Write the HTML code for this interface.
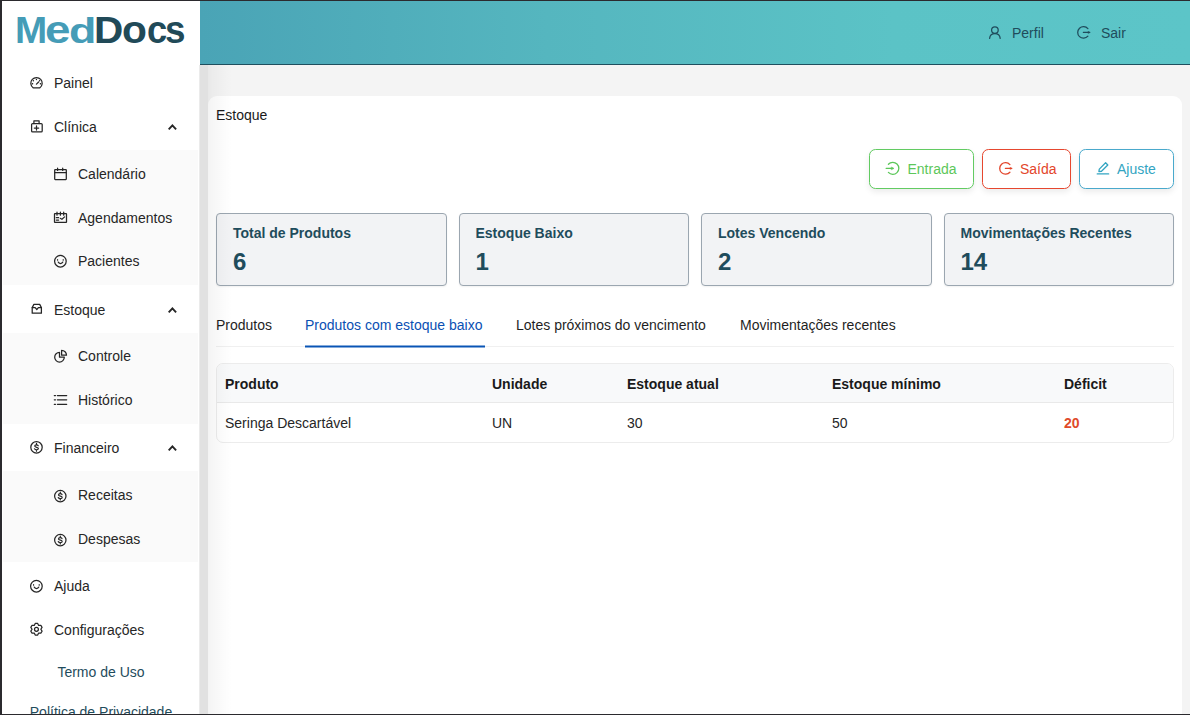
<!DOCTYPE html>
<html><head><meta charset="utf-8">
<style>
*{box-sizing:border-box;margin:0;padding:0}
html,body{width:1190px;height:715px;overflow:hidden;background:#f4f4f4;font-family:"Liberation Sans",sans-serif;font-size:14px;color:#1f1f1f;position:relative}
.abs{position:absolute}
svg{overflow:visible}
#frameT{left:0;top:0;width:1190px;height:1px;background:#2b2a2e;z-index:50}
#frameL{left:0;top:0;width:2px;height:715px;background:#2b2a2e;z-index:50}
#frameB{left:0;top:714px;width:1190px;height:1px;background:#2b2a2e;z-index:50}
#sidebar{left:0;top:0;width:200px;height:715px;background:#fff;z-index:10}
#shadow{left:199px;top:65px;width:40px;height:650px;z-index:11;background:linear-gradient(to right,rgba(0,0,0,0.08) 0,rgba(0,0,0,0.078) 9px,rgba(0,0,0,0.05) 9px,rgba(0,0,0,0.035) 13px,rgba(0,0,0,0.0) 33px)}
#logo{left:0;top:0;width:200px;height:60px}
.g{position:absolute;font-size:100px;line-height:120px;font-weight:700;transform-origin:0 0}
.g.m{color:#459cb7}.g.d{color:#214a58}
.sub{left:3px;width:195px;background:#fafafa}
.item{position:absolute;height:40px;line-height:40px;white-space:nowrap;color:#262626}
#header{left:200px;top:0;width:990px;height:65px;background:linear-gradient(to right,#4aa4b6 0%,#55b6bf 35%,#5bc3c6 70%,#5cc5c8 100%);border-bottom:1px solid #1f4f5e;z-index:5}
.hl{position:absolute;top:24px;color:#1f4c5c;line-height:18px;white-space:nowrap}
#card{left:208px;top:96px;width:974px;height:640px;background:#fff;border-radius:9px}
#title{left:216px;top:106px;line-height:18px;color:#1a1a1a}
.btn{position:absolute;top:149px;height:40px;border:1.5px solid;border-radius:6.5px;background:#fff;box-shadow:0 3px 6px rgba(0,0,0,0.08);white-space:nowrap}
.btn span{position:absolute;top:9.5px;line-height:18px}
.stat{position:absolute;top:213px;width:230.5px;height:73px;background:#f2f3f5;border:1.5px solid #9ba6b0;border-radius:4px;box-shadow:0 1px 2px rgba(0,0,0,0.06)}
.stat .l{position:absolute;left:16px;top:10px;font-weight:700;color:#1f4c5c;line-height:18px;white-space:nowrap}
.stat .n{position:absolute;left:16px;top:34px;font-weight:700;font-size:24px;color:#1f4c5c;line-height:28px}
.tab{position:absolute;top:316px;line-height:18px;white-space:nowrap;color:#1f1f1f}
#tabline{left:216px;top:346px;width:958px;height:1px;background:#f0f0f0}
#ink{left:305px;top:345px;width:180px;height:3px;background:linear-gradient(to bottom,rgba(10,85,181,0.5) 0,rgba(10,85,181,0.5) 1px,#0a55b5 1px,#0a55b5 2px,rgba(10,85,181,0.5) 2px)}
#table{left:216px;top:363px;width:958px;height:80px;border:1px solid #ececec;border-radius:7px;overflow:hidden}
#thead{position:absolute;left:0;top:0;width:100%;height:39px;background:#f8f9fa;border-bottom:1px solid #e9e9e9}
.th{position:absolute;top:11px;font-weight:700;color:#1a1a1a;line-height:18px;white-space:nowrap}
.td{position:absolute;top:50px;color:#262626;line-height:18px;white-space:nowrap}
</style></head><body>
<div id="frameT" class="abs"></div><div id="frameL" class="abs"></div><div id="frameB" class="abs"></div>

<div id="header" class="abs">
  <div class="hl" style="left:812px">Perfil</div>
  <div class="hl" style="left:901px">Sair</div>
</div>
<svg class="abs" style="left:987px;top:25px;z-index:6" width="14" height="14" viewBox="0 0 14 14" fill="none" stroke="#1f4c5c" stroke-width="1.25" stroke-linecap="round" stroke-linejoin="round"><circle cx="7.9" cy="5.1" r="3.3"/><path d="M2.6 13.4C2.9 10.6 4.9 8.7 7.9 8.7S12.9 10.6 13.2 13.4"/></svg>
<svg class="abs" style="left:1076px;top:25px;color:#1f4c5c;z-index:6" width="14" height="14" viewBox="0 0 14 14" fill="none" stroke="#1f4c5c" stroke-width="1.25" stroke-linecap="round" stroke-linejoin="round"><path d="M11.9 3.6A5.8 5.8 0 1 0 11.9 11.2"/><path d="M7.4 7.4H13.2"/><path d="M12.4 6.5L14.3 7.4L12.4 8.3Z" fill="currentColor" stroke-width="0.5"/></svg>

<div id="card" class="abs"></div>
<div id="title" class="abs">Estoque</div>

<div class="btn" style="left:869px;width:105px;border-color:#62cb62;color:#5cc75a"><span style="left:37.5px">Entrada</span></div>
<div class="btn" style="left:982px;width:89px;border-color:#e6472f;color:#e3452b"><span style="left:37px">Saída</span></div>
<div class="btn" style="left:1079px;width:95px;border-color:#49a9cc;color:#33a5c2"><span style="left:37px">Ajuste</span></div>
<svg class="abs" style="left:884px;top:160px;color:#5cc75a;z-index:3" width="14" height="14" viewBox="0 0 14 14" fill="none" stroke="#5cc75a" stroke-width="1.3" stroke-linecap="round" stroke-linejoin="round"><path d="M4.4 4.3A6 6 0 1 1 4.4 12.4"/><path d="M2.2 8.4H8.6"/><path d="M7.6 7.2L10 8.4L7.6 9.6Z" fill="currentColor" stroke-width="0.6"/></svg>
<svg class="abs" style="left:998px;top:161px;color:#e3452b;z-index:3" width="14" height="14" viewBox="0 0 14 14" fill="none" stroke="#e3452b" stroke-width="1.3" stroke-linecap="round" stroke-linejoin="round"><path d="M11.9 3.6A5.8 5.8 0 1 0 11.9 11.2"/><path d="M7.4 7.4H13.2"/><path d="M12.4 6.5L14.3 7.4L12.4 8.3Z" fill="currentColor" stroke-width="0.5"/></svg>
<svg class="abs" style="left:1096px;top:161px;color:#33a5c2;z-index:3" width="14" height="14" viewBox="0 0 14 14" fill="none" stroke="#33a5c2" stroke-width="1.3" stroke-linecap="round" stroke-linejoin="round"><path d="M1.3 12.9H12.6" stroke-width="1.4"/><path d="M2.9 10.5L3.3 8.1L9.6 1.8L11.8 4L5.5 10.3Z" stroke-width="1.3"/></svg>

<div class="stat" style="left:216px"><div class="l">Total de Produtos</div><div class="n">6</div></div>
<div class="stat" style="left:458.5px"><div class="l">Estoque Baixo</div><div class="n">1</div></div>
<div class="stat" style="left:701px"><div class="l">Lotes Vencendo</div><div class="n">2</div></div>
<div class="stat" style="left:943.5px"><div class="l">Movimentações Recentes</div><div class="n">14</div></div>

<div class="tab" style="left:216px">Produtos</div>
<div class="tab" style="left:305px;color:#0a50b3">Produtos com estoque baixo</div>
<div class="tab" style="left:516px">Lotes próximos do vencimento</div>
<div class="tab" style="left:740px">Movimentações recentes</div>
<div id="tabline" class="abs"></div>
<div id="ink" class="abs"></div>

<div id="table" class="abs">
  <div id="thead"></div>
  <div class="th" style="left:8px">Produto</div>
  <div class="th" style="left:275px">Unidade</div>
  <div class="th" style="left:410px">Estoque atual</div>
  <div class="th" style="left:615px">Estoque mínimo</div>
  <div class="th" style="left:847px">Déficit</div>
  <div class="td" style="left:8px">Seringa Descartável</div>
  <div class="td" style="left:275px">UN</div>
  <div class="td" style="left:410px">30</div>
  <div class="td" style="left:615px">50</div>
  <div class="td" style="left:847px;color:#e04a2a;font-weight:700">20</div>
</div>

<div id="sidebar" class="abs">
  <div id="logo" class="abs"><span class="g m" style="left:15.29px;top:7.30px;transform:scale(0.3871,0.3768)">M</span><span class="g m" style="left:45.07px;top:6.57px;transform:scale(0.4583,0.3836)">e</span><span class="g m" style="left:69.31px;top:9.26px;transform:scale(0.4480,0.3562)">d</span><span class="g d" style="left:94.27px;top:7.30px;transform:scale(0.4049,0.3768)">D</span><span class="g d" style="left:122.37px;top:6.22px;transform:scale(0.4075,0.3873)">o</span><span class="g d" style="left:146.55px;top:6.22px;transform:scale(0.3633,0.3873)">c</span><span class="g d" style="left:164.73px;top:6.22px;transform:scale(0.3681,0.3873)">s</span></div>
  <div class="sub abs" style="top:150px;height:135px"></div>
  <div class="sub abs" style="top:333px;height:91px"></div>
  <div class="sub abs" style="top:471px;height:91px"></div>
<div class="item" style="top:63px;left:54px">Painel</div>
<svg class="abs" style="left:30px;top:76px;" width="14" height="14" viewBox="0 0 14 14" fill="none" stroke="#262626" stroke-width="1.25" stroke-linecap="round" stroke-linejoin="round"><path d="M3.1 11.8A5.7 5.7 0 1 1 9.9 11.8Z"/><path d="M6.45 8.1L8.6 6"/><path d="M6.45 3.4v.1M3.4 4.6v.1M2.4 7.8h.2M10.4 7.8h.2M9.6 4.6v.1" stroke-width="1.4"/></svg>
<div class="item" style="top:107px;left:54px">Clínica</div>
<svg class="abs" style="left:30px;top:119px;" width="14" height="14" viewBox="0 0 14 14" fill="none" stroke="#262626" stroke-width="1.25" stroke-linecap="round" stroke-linejoin="round"><rect x="1.6" y="4.6" width="10.6" height="8.3" rx="1"/><path d="M3.9 4.6V1.8H9.1V4.6"/><path d="M6.5 6.9v4.1M4.3 9h4.4"/></svg>
<svg class="abs" style="left:166px;top:122px;" width="14" height="14" viewBox="0 0 14 14" fill="none" stroke="#262626" stroke-width="1.9" stroke-linecap="round" stroke-linejoin="round"><path d="M2.7 7.3L6.4 3.3L10.1 7.3" stroke-width="1.9" stroke-linecap="butt" stroke-linejoin="miter"/></svg>
<div class="item" style="top:290px;left:54px">Estoque</div>
<svg class="abs" style="left:30px;top:302px;" width="14" height="14" viewBox="0 0 14 14" fill="none" stroke="#262626" stroke-width="1.25" stroke-linecap="round" stroke-linejoin="round"><path d="M2.2 11.2V5.6L3.9 2.4H9.7L11.4 5.6V11.2Z"/><path d="M2.2 5.6H5.2L6.8 7.5L8.4 5.6H11.4"/></svg>
<svg class="abs" style="left:166px;top:305px;" width="14" height="14" viewBox="0 0 14 14" fill="none" stroke="#262626" stroke-width="1.9" stroke-linecap="round" stroke-linejoin="round"><path d="M2.7 7.3L6.4 3.3L10.1 7.3" stroke-width="1.9" stroke-linecap="butt" stroke-linejoin="miter"/></svg>
<div class="item" style="top:428px;left:54px">Financeiro</div>
<svg class="abs" style="left:30px;top:440px;" width="14" height="14" viewBox="0 0 14 14" fill="none" stroke="#262626" stroke-width="1.25" stroke-linecap="round" stroke-linejoin="round"><circle cx="6.5" cy="7.3" r="5.7"/><path d="M8.2 5.8C7.9 5.1 7.3 4.8 6.5 4.8C5.5 4.8 4.7 5.3 4.7 6.1C4.7 7.7 8.4 7.0 8.4 8.6C8.4 9.3 7.6 9.8 6.5 9.8C5.6 9.8 4.9 9.5 4.5 8.8M6.5 3.4V4.8M6.5 9.8V11.2" stroke-width="1.2"/></svg>
<svg class="abs" style="left:166px;top:443px;" width="14" height="14" viewBox="0 0 14 14" fill="none" stroke="#262626" stroke-width="1.9" stroke-linecap="round" stroke-linejoin="round"><path d="M2.7 7.3L6.4 3.3L10.1 7.3" stroke-width="1.9" stroke-linecap="butt" stroke-linejoin="miter"/></svg>
<div class="item" style="top:566px;left:54px">Ajuda</div>
<svg class="abs" style="left:29px;top:579px;" width="14" height="14" viewBox="0 0 14 14" fill="none" stroke="#262626" stroke-width="1.25" stroke-linecap="round" stroke-linejoin="round"><circle cx="7.4" cy="7.2" r="5.8"/><path d="M4.6 5.6v.6M10.2 5.6v.6" stroke-width="1.1"/><path d="M5.2 8.1C5.6 9.1 6.4 9.5 7.5 9.5S9.4 9.1 9.8 8.1"/></svg>
<div class="item" style="top:610px;left:54px">Configurações</div>
<svg class="abs" style="left:30px;top:623px;" width="14" height="14" viewBox="0 0 14 14" fill="none" stroke="#262626" stroke-width="1.25" stroke-linecap="round" stroke-linejoin="round"><path d="M5.22 0.48 L7.68 0.48 L8.65 2.44 L10.83 2.30 L12.06 4.43 L10.85 6.25 L12.06 8.07 L10.83 10.20 L8.65 10.06 L7.68 12.02 L5.22 12.02 L4.25 10.06 L2.07 10.20 L0.84 8.07 L2.05 6.25 L0.84 4.43 L2.07 2.30 L4.25 2.44Z"/><circle cx="6.45" cy="6.3" r="1.95"/></svg>
<div class="item" style="top:154px;left:78px">Calendário</div>
<svg class="abs" style="left:53px;top:167px;" width="14" height="14" viewBox="0 0 14 14" fill="none" stroke="#262626" stroke-width="1.25" stroke-linecap="round" stroke-linejoin="round"><rect x="1.7" y="2.5" width="11.6" height="10" rx="0.5"/><path d="M1.7 5.7h11.6M4.6 1.2v2.2M9.7 1.2v2.2"/></svg>
<div class="item" style="top:198px;left:78px">Agendamentos</div>
<svg class="abs" style="left:53px;top:211px;" width="14" height="14" viewBox="0 0 14 14" fill="none" stroke="#262626" stroke-width="1.25" stroke-linecap="round" stroke-linejoin="round"><rect x="1.5" y="2.6" width="12" height="8.8" rx="0.4"/><path d="M4 1.2v3M7.4 1.2v3M10.7 1.2v3M3.3 6.7h2.3M3.3 9h2.3M7.3 7.3l1.6 1 2.7-2.4"/></svg>
<div class="item" style="top:241px;left:78px">Pacientes</div>
<svg class="abs" style="left:53px;top:254px;" width="14" height="14" viewBox="0 0 14 14" fill="none" stroke="#262626" stroke-width="1.25" stroke-linecap="round" stroke-linejoin="round"><circle cx="7.4" cy="7.2" r="5.8"/><path d="M4.6 5.6v.6M10.2 5.6v.6" stroke-width="1.1"/><path d="M5.2 8.1C5.6 9.1 6.4 9.5 7.5 9.5S9.4 9.1 9.8 8.1"/></svg>
<div class="item" style="top:336px;left:78px">Controle</div>
<svg class="abs" style="left:53px;top:349px;" width="14" height="14" viewBox="0 0 14 14" fill="none" stroke="#262626" stroke-width="1.25" stroke-linecap="round" stroke-linejoin="round"><path d="M6.5 3.4V8.2H11.3A4.8 4.8 0 1 1 6.5 3.4Z"/><path d="M8.6 6.2V1.3A4.9 4.9 0 0 1 13.5 6.2Z"/></svg>
<div class="item" style="top:380px;left:78px">Histórico</div>
<svg class="abs" style="left:53px;top:393px;" width="14" height="14" viewBox="0 0 14 14" fill="none" stroke="#262626" stroke-width="1.25" stroke-linecap="round" stroke-linejoin="round"><path d="M1.3 2.5h1.2M1.3 6.8h1.2M1.3 11.3h1.2M4.4 2.5h9.3M4.4 6.8h9.3M4.4 11.3h9.3"/></svg>
<div class="item" style="top:475px;left:78px">Receitas</div>
<svg class="abs" style="left:53px;top:489px;" width="14" height="14" viewBox="0 0 14 14" fill="none" stroke="#262626" stroke-width="1.25" stroke-linecap="round" stroke-linejoin="round"><circle cx="7.3" cy="7.1" r="5.7"/><path d="M9.0 5.6C8.7 4.8999999999999995 8.1 4.6 7.3 4.6C6.3 4.6 5.5 5.1 5.5 5.8999999999999995C5.5 7.5 9.2 6.8 9.2 8.4C9.2 9.1 8.4 9.6 7.3 9.6C6.3999999999999995 9.6 5.699999999999999 9.3 5.3 8.6M7.3 3.1999999999999997V4.6M7.3 9.6V11.0" stroke-width="1.2"/></svg>
<div class="item" style="top:519px;left:78px">Despesas</div>
<svg class="abs" style="left:53px;top:533px;" width="14" height="14" viewBox="0 0 14 14" fill="none" stroke="#262626" stroke-width="1.25" stroke-linecap="round" stroke-linejoin="round"><circle cx="7.3" cy="7.1" r="5.7"/><path d="M9.0 5.6C8.7 4.8999999999999995 8.1 4.6 7.3 4.6C6.3 4.6 5.5 5.1 5.5 5.8999999999999995C5.5 7.5 9.2 6.8 9.2 8.4C9.2 9.1 8.4 9.6 7.3 9.6C6.3999999999999995 9.6 5.699999999999999 9.3 5.3 8.6M7.3 3.1999999999999997V4.6M7.3 9.6V11.0" stroke-width="1.2"/></svg>
  <div class="abs" style="left:0;width:202px;top:663px;line-height:18px;text-align:center;color:#1f4c5c">Termo de Uso</div>
  <div class="abs" style="left:0;width:202px;top:703px;line-height:18px;text-align:center;color:#1f4c5c">Política de Privacidade</div>
</div>
<div id="shadow" class="abs"></div>
</body></html>
